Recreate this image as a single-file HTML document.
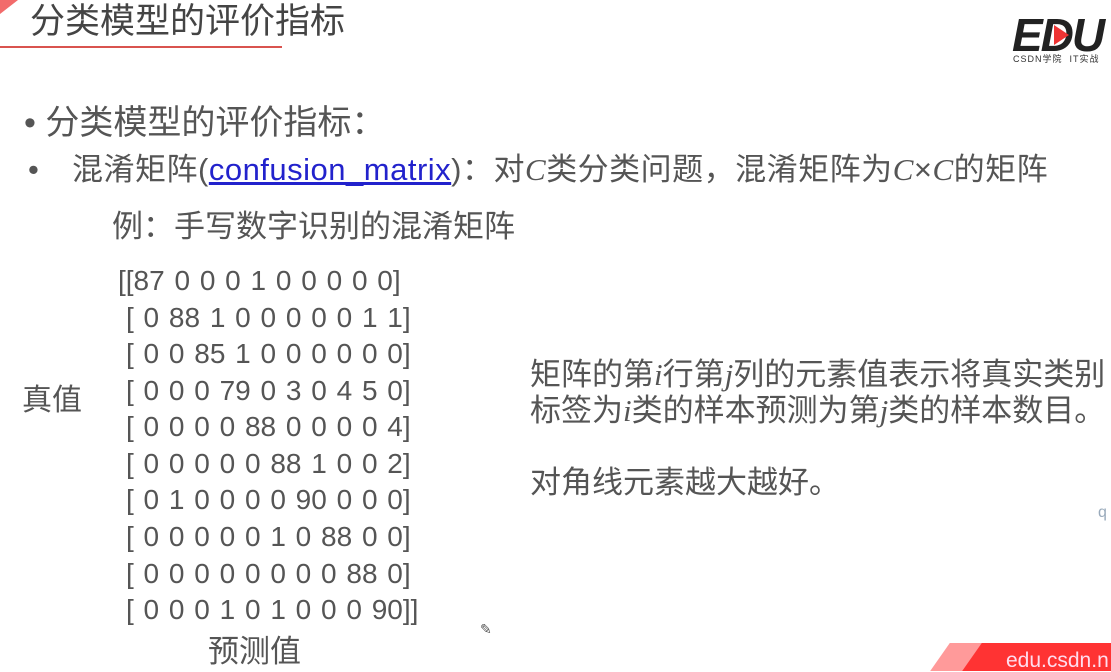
<!DOCTYPE html>
<html><head><meta charset="utf-8"><style>
body{margin:0;width:1111px;height:671px;background:#fff;position:relative;overflow:hidden;font-family:"Liberation Sans","Noto Sans CJK SC",sans-serif;color:#555}
.a{position:absolute;white-space:pre;line-height:1}
.m{font-size:28px;word-spacing:2px;color:#555}
i{font-family:"Liberation Serif",serif}
</style></head><body>
<div class="a" style="left:0;top:0;width:0;height:0;border-left:18px solid #f26b6b;border-bottom:14px solid transparent"></div>
<div class="a" style="left:30px;top:4px;font-size:35px;color:#444">分类模型的评价指标</div>
<div class="a" style="left:0;top:46px;width:282px;height:2px;background:#d9534f"></div>
<div class="a" style="left:1012px;top:12px;font-size:46px;font-weight:bold;font-style:italic;color:#222;letter-spacing:-2px">EDU</div>
<div class="a" style="left:1054px;top:25px;width:0;height:0;border-left:15px solid #e33;border-top:10px solid transparent;border-bottom:10px solid transparent"></div>
<div class="a" style="left:1013px;top:55px;font-size:9px;color:#333;letter-spacing:1px">CSDN学院 &nbsp;IT实战</div>
<div class="a" style="left:24px;top:106px;font-size:34px;color:#555">• 分类模型的评价指标：</div>
<div class="a" style="left:28px;top:154px;font-size:31px;color:#555">•</div>
<div class="a" style="left:72px;top:154px;font-size:31px;color:#555;letter-spacing:0.5px">混淆矩阵(<span style="color:#22c;text-decoration:underline">confusion_matrix</span>)：对<i>C</i>类分类问题，混淆矩阵为<i>C</i>×<i>C</i>的矩阵</div>
<div class="a" style="left:112px;top:211px;font-size:31px">例：手写数字识别的混淆矩阵</div>
<div class="a m" style="left:118px;top:267px">[[87 0 0 0 1 0 0 0 0 0]</div>
<div class="a m" style="left:126px;top:304px">[ 0 88 1 0 0 0 0 0 1 1]</div>
<div class="a m" style="left:126px;top:340px">[ 0 0 85 1 0 0 0 0 0 0]</div>
<div class="a m" style="left:126px;top:377px">[ 0 0 0 79 0 3 0 4 5 0]</div>
<div class="a m" style="left:126px;top:413px">[ 0 0 0 0 88 0 0 0 0 4]</div>
<div class="a m" style="left:126px;top:450px">[ 0 0 0 0 0 88 1 0 0 2]</div>
<div class="a m" style="left:126px;top:486px">[ 0 1 0 0 0 0 90 0 0 0]</div>
<div class="a m" style="left:126px;top:523px">[ 0 0 0 0 0 1 0 88 0 0]</div>
<div class="a m" style="left:126px;top:560px">[ 0 0 0 0 0 0 0 0 88 0]</div>
<div class="a m" style="left:126px;top:596px">[ 0 0 0 1 0 1 0 0 0 90]]</div>
<div class="a" style="left:22px;top:386px;font-size:30px">真值</div>
<div class="a" style="left:208px;top:636px;font-size:31px">预测值</div>
<div class="a" style="left:530px;top:357px;font-size:31px;line-height:36px">矩阵的第<i>i</i>行第<i>j</i>列的元素值表示将真实类别
标签为<i>i</i>类的样本预测为第<i>j</i>类的样本数目。

对角线元素越大越好。</div>
<div class="a" style="left:1098px;top:505px;font-size:16px;color:#9ab">q</div>
<div class="a" style="left:480px;top:622px;font-size:14px;color:#555">✎</div>
<div class="a" style="left:940px;top:643px;width:200px;height:28px;background:#ff9a9a;transform:skewX(-35deg)"></div>
<div class="a" style="left:990px;top:643px;width:140px;height:28px;background:#f33"></div>
<div class="a" style="left:972px;top:643px;width:30px;height:28px;background:#f33;transform:skewX(-35deg)"></div>
<div class="a" style="left:1006px;top:650px;font-size:21px;color:#fde">edu.csdn.n</div>
</body></html>
